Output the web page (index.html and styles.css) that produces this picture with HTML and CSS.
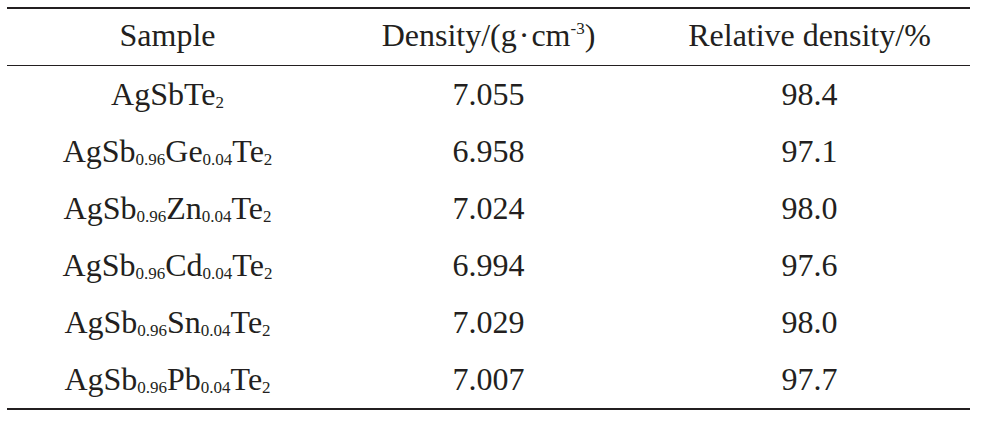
FILE: index.html
```html
<!DOCTYPE html>
<html lang="en">
<head>
<meta charset="utf-8">
<title>Density table</title>
<link rel="stylesheet" href="styles.css">
</head>
<body>
<div class="page">
  <table class="data">
    <thead>
      <tr>
        <th>Sample</th>
        <th>Density/(g<span class="dot">·</span>cm<sup>-3</sup>)</th>
        <th>Relative density/%</th>
      </tr>
    </thead>
    <tbody>
      <tr><td>AgSbTe<sub>2</sub></td><td>7.055</td><td>98.4</td></tr>
      <tr><td>AgSb<sub>0.96</sub>Ge<sub>0.04</sub>Te<sub>2</sub></td><td>6.958</td><td>97.1</td></tr>
      <tr><td>AgSb<sub>0.96</sub>Zn<sub>0.04</sub>Te<sub>2</sub></td><td>7.024</td><td>98.0</td></tr>
      <tr><td>AgSb<sub>0.96</sub>Cd<sub>0.04</sub>Te<sub>2</sub></td><td>6.994</td><td>97.6</td></tr>
      <tr><td>AgSb<sub>0.96</sub>Sn<sub>0.04</sub>Te<sub>2</sub></td><td>7.029</td><td>98.0</td></tr>
      <tr><td>AgSb<sub>0.96</sub>Pb<sub>0.04</sub>Te<sub>2</sub></td><td>7.007</td><td>97.7</td></tr>
    </tbody>
  </table>
</div>
</body>
</html>
```
FILE: styles.css
```css
html, body {
  margin: 0;
  padding: 0;
  background: #ffffff;
}

.page {
  padding: 7px 0 0 7px;
  font-family: "Liberation Serif", "Times New Roman", serif;
  font-size: 32px;
  color: #231f20;
}

.data {
  width: 963px;
  border-collapse: separate;
  border-spacing: 0;
  border-top: 2px solid #231f20;
  border-bottom: 2px solid #231f20;
  table-layout: fixed;
}

.data th,
.data td {
  width: 33.333%;
  padding: 0;
  text-align: center;
  font-weight: normal;
  white-space: nowrap;
}

.data th {
  line-height: 52px;
  padding-bottom: 4px;
  border-bottom: 1px solid #231f20;
}

.data td {
  line-height: 57px;
}

.data sub {
  font-size: 17px;
  line-height: 0;
  vertical-align: -3px;
}

.data sup {
  font-size: 17px;
  line-height: 0;
  vertical-align: 12px;
}

.dot {
  margin: 0 2px;
}
```
